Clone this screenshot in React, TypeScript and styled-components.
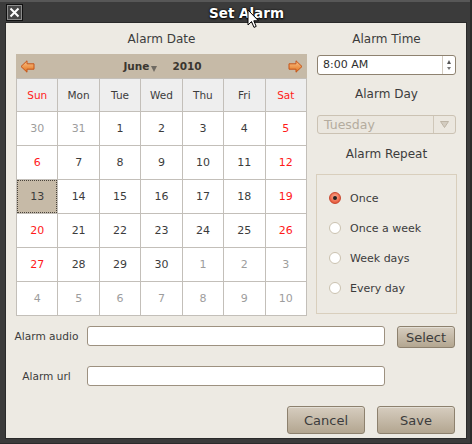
import styled, { createGlobalStyle } from "styled-components";

const GlobalStyle = createGlobalStyle`
    html, body {
        margin: 0;
        padding: 0;
        background: #2b2b2b;
    }
    body {
        font-family: "DejaVu Sans", "Liberation Sans", sans-serif;
        color: #3c3c3c;
    }
`;

const weeks: number[][] = [
    [30, 31, 1, 2, 3, 4, 5],
    [6, 7, 8, 9, 10, 11, 12],
    [13, 14, 15, 16, 17, 18, 19],
    [20, 21, 22, 23, 24, 25, 26],
    [27, 28, 29, 30, 1, 2, 3],
    [4, 5, 6, 7, 8, 9, 10],
];

const dayNames = ["Sun", "Mon", "Tue", "Wed", "Thu", "Fri", "Sat"];

const repeatOptions = ["Once", "Once a week", "Week days", "Every day"];

// days outside June
const isMuted = (row: number, value: number) =>
    (row === 0 && value > 20) || (row >= 4 && value < 20);

const ArrowIcon = ({ flip }: { flip?: boolean }) => (
    <svg width="15" height="13" viewBox="0 0 15 13" style={flip ? { transform: "scaleX(-1)" } : undefined}>
        <defs>
            <linearGradient id={flip ? "arrR" : "arrL"} x1="0" y1="0" x2="0" y2="1">
                <stop offset="0" stopColor="#fbc58a" />
                <stop offset="1" stopColor="#e2711c" />
            </linearGradient>
        </defs>
        <path
            d="M1 6.5 L7 0.8 L7 3.8 L14 3.8 L14 9.2 L7 9.2 L7 12.2 Z"
            fill={`url(#${flip ? "arrR" : "arrL"})`}
            stroke="#c4551a"
            strokeWidth="1"
            strokeLinejoin="round"
        />
    </svg>
);

const App = () => {
    return (
        <>
            <GlobalStyle />
            <Desktop>
                <Window>
                    <TitleBar>
                        <CloseButton>
                            <svg width="13" height="13" viewBox="0 0 13 13">
                                <path d="M2.5 2.5 L10.5 10.5 M10.5 2.5 L2.5 10.5" stroke="#fff" strokeWidth="2" />
                            </svg>
                        </CloseButton>
                        <Title>Set Alarm</Title>
                    </TitleBar>
                    <Cursor width="13" height="20" viewBox="0 0 13 20">
                        <path d="M1 1 L1 16 L4.5 12.6 L7 18.4 L9.2 17.4 L6.8 11.8 L11.5 11.8 Z" fill="#fff" stroke="#000" strokeWidth="1" strokeLinejoin="round" />
                    </Cursor>

                    <Content>
                        <TopSection>
                            <Column>
                                <SectionLabel $bottom={7}>Alarm Date</SectionLabel>
                                <Calendar>
                                    <CalendarHeader>
                                        <ArrowIcon />
                                        <MonthYear>
                                            <span>June</span>
                                            <DropTriangle />
                                            <Year>2010</Year>
                                        </MonthYear>
                                        <ArrowIcon flip />
                                    </CalendarHeader>
                                    <DayGrid>
                                        {dayNames.map((d, i) => (
                                            <DayName key={d} $weekend={i === 0 || i === 6}>{d}</DayName>
                                        ))}
                                        {weeks.map((week, r) =>
                                            week.map((value, c) => {
                                                const muted = isMuted(r, value);
                                                const selected = r === 2 && c === 0;
                                                return (
                                                    <DayCell
                                                        key={`${r}-${c}`}
                                                        $muted={muted}
                                                        $weekend={!muted && !selected && (c === 0 || c === 6)}
                                                        $selected={selected}
                                                    >
                                                        {value}
                                                    </DayCell>
                                                );
                                            })
                                        )}
                                    </DayGrid>
                                </Calendar>
                            </Column>

                            <Column>
                                <SectionLabel $bottom={8}>Alarm Time</SectionLabel>
                                <SpinBox>
                                    <SpinText>8:00 AM</SpinText>
                                    <SpinButtons>
                                        <Tri $up />
                                        <Tri />
                                    </SpinButtons>
                                </SpinBox>
                                <SectionLabel $top={11} $bottom={13}>Alarm Day</SectionLabel>
                                <Combo>
                                    <ComboText>Tuesday</ComboText>
                                    <ComboArrow>
                                        <svg width="9" height="7" viewBox="0 0 9 7">
                                            <path d="M0.5 0.5 L8.5 0.5 L4.5 6.5 Z" fill="#d3ccc0" stroke="#bdb4a5" strokeWidth="1" />
                                        </svg>
                                    </ComboArrow>
                                </Combo>
                                <SectionLabel $top={12} $bottom={12}>Alarm Repeat</SectionLabel>
                                <GroupBox>
                                    {repeatOptions.map((opt, i) => (
                                        <RadioRow key={opt}>
                                            <Radio $checked={i === 0} />
                                            <RadioLabel>{opt}</RadioLabel>
                                        </RadioRow>
                                    ))}
                                </GroupBox>
                            </Column>
                        </TopSection>

                        <FormGrid>
                            <FieldLabel>Alarm audio</FieldLabel>
                            <TextInput />
                            <Button $width={58} $height={22}>Select</Button>
                            <FieldLabel>Alarm url</FieldLabel>
                            <TextInput />
                        </FormGrid>

                        <ButtonRow>
                            <Button $width={78} $height={28}>Cancel</Button>
                            <Button $width={78} $height={28}>Save</Button>
                        </ButtonRow>
                    </Content>
                </Window>
            </Desktop>
        </>
    );
};

const Desktop = styled.div`
    width: 472px;
    height: 444px;
    overflow: hidden;
`;

const Window = styled.div`
    position: relative;
    width: 470px;
    height: 443px;
    box-sizing: border-box;
    background: #3b3b3b;
    border-top: 2px solid #575757;
    display: flex;
    flex-direction: column;
`;

const TitleBar = styled.div`
    height: 21px;
    display: flex;
    align-items: center;
    padding-left: 6px;
`;

const CloseButton = styled.div`
    width: 17px;
    height: 17px;
    box-sizing: border-box;
    border: 1px solid #111;
    box-shadow: inset 0 0 0 1px #8c8c8c;
    background: #474747;
    display: flex;
    align-items: center;
    justify-content: center;
`;

const Title = styled.div`
    flex: 1;
    text-align: center;
    color: #fff;
    font-weight: bold;
    font-size: 13.5px;
    text-shadow: 0 1px 2px #000, 0 0 2px #000;
`;

const Cursor = styled.svg`
    position: absolute;
    left: 247px;
    top: 7px;
`;

const Content = styled.div`
    flex: 1;
    margin: 0 4px 5px 6px;
    background: #edeae3;
    box-shadow: 0 0 0 1px #2a2a2a;
    padding-top: 8px;
    display: flex;
    flex-direction: column;
`;

const TopSection = styled.div`
    display: grid;
    grid-template-columns: 291px 141px;
    column-gap: 9px;
    padding: 0 9px 0 10px;
`;

const Column = styled.div`
    display: flex;
    flex-direction: column;
`;

const SectionLabel = styled.div<{ $top?: number; $bottom?: number }>`
    margin-top: ${(p) => p.$top ?? 0}px;
    margin-bottom: ${(p) => p.$bottom ?? 0}px;
    height: 16px;
    line-height: 16px;
    font-size: 12px;
    text-align: center;
    color: #3c3c3c;
`;

const Calendar = styled.div`
    display: flex;
    flex-direction: column;
`;

const CalendarHeader = styled.div`
    height: 24px;
    background: #c6baa7;
    display: flex;
    align-items: center;
    padding: 0 4px;
`;

const MonthYear = styled.div`
    flex: 1;
    display: flex;
    align-items: center;
    justify-content: center;
    font-weight: bold;
    font-size: 10.5px;
    color: #3a3630;
    padding-left: 2px;
`;

const DropTriangle = styled.span`
    width: 0;
    height: 0;
    margin: 5px 0 0 2px;
    border-left: 3.5px solid transparent;
    border-right: 3.5px solid transparent;
    border-top: 6px solid #6f6a62;
`;

const Year = styled.span`
    margin-left: 15px;
`;

const DayGrid = styled.div`
    display: grid;
    grid-template-columns: repeat(7, 1fr);
    grid-template-rows: 32px repeat(6, 33px);
    gap: 1px;
    padding: 1px;
    background: #c3bfb9;
`;

const DayName = styled.div<{ $weekend: boolean }>`
    background: #eeeeee;
    display: flex;
    align-items: center;
    justify-content: center;
    font-size: 10.5px;
    color: ${(p) => (p.$weekend ? "#ff1a1a" : "#3c3c3c")};
`;

const DayCell = styled.div<{ $muted: boolean; $weekend: boolean; $selected: boolean }>`
    background: ${(p) => (p.$selected ? "#c6baa7" : "#ffffff")};
    outline: ${(p) => (p.$selected ? "1px dotted #4a443b" : "none")};
    outline-offset: -1px;
    display: flex;
    align-items: center;
    justify-content: center;
    font-size: 11px;
    color: ${(p) => (p.$muted ? "#9d9d9d" : p.$weekend ? "#ff1a1a" : "#3c3c3c")};
`;

const SpinBox = styled.div`
    height: 20px;
    box-sizing: border-box;
    display: flex;
    border: 1px solid #8e8270;
    border-radius: 3px;
    background: #fff;
    margin-left: 1px;
    margin-right: 1px;
`;

const SpinText = styled.div`
    flex: 1;
    font-size: 11px;
    line-height: 18px;
    padding-left: 5px;
    color: #2e2e2e;
`;

const SpinButtons = styled.div`
    width: 12px;
    border-left: 1px solid #d2cbc0;
    display: flex;
    flex-direction: column;
    align-items: center;
    justify-content: space-around;
    padding: 2px 0;
`;

const Tri = styled.span<{ $up?: boolean }>`
    width: 0;
    height: 0;
    border-left: 2.5px solid transparent;
    border-right: 2.5px solid transparent;
    ${(p) => (p.$up ? "border-bottom: 4px solid #555;" : "border-top: 3px solid #777;")}
`;

const Combo = styled.div`
    height: 19px;
    box-sizing: border-box;
    display: flex;
    border: 1px solid #cbc2b3;
    border-radius: 3px;
    background: #ebe7df;
    margin-left: 1px;
    margin-right: 1px;
`;

const ComboText = styled.div`
    flex: 1;
    font-size: 12.5px;
    line-height: 17px;
    padding-left: 6px;
    color: #b4ac9e;
`;

const ComboArrow = styled.div`
    width: 21px;
    border-left: 1px solid #cfc7b9;
    display: flex;
    align-items: center;
    justify-content: center;
`;

const GroupBox = styled.div`
    height: 140px;
    box-sizing: border-box;
    border: 1px solid #d9cfbd;
    padding: 8px 0 0 12px;
`;

const RadioRow = styled.div`
    height: 30px;
    display: flex;
    align-items: center;
    gap: 9px;
`;

const Radio = styled.span<{ $checked: boolean }>`
    position: relative;
    width: 12px;
    height: 12px;
    box-sizing: border-box;
    border-radius: 50%;
    border: 1px solid ${(p) => (p.$checked ? "#c9472e" : "#cbc2b0")};
    background: ${(p) =>
        p.$checked ? "radial-gradient(circle at 50% 40%, #fbb39a 0%, #ec6a4c 60%, #d9432a 100%)" : "#ffffff"};
    &::after {
        content: "";
        display: ${(p) => (p.$checked ? "block" : "none")};
        position: absolute;
        left: 3px;
        top: 3px;
        width: 4px;
        height: 4px;
        border-radius: 50%;
        background: #222;
    }
`;

const RadioLabel = styled.span`
    font-size: 11px;
    color: #3c3c3c;
`;

const FormGrid = styled.div`
    margin-top: 10px;
    display: grid;
    grid-template-columns: 81px 310px 58px;
    grid-auto-rows: 22px;
    row-gap: 18px;
`;

const FieldLabel = styled.div`
    height: 20px;
    line-height: 20px;
    text-align: center;
    font-size: 10.6px;
    color: #3c3c3c;
`;

const TextInput = styled.div`
    width: 298px;
    height: 20px;
    box-sizing: border-box;
    background: #fff;
    border: 1px solid #9d9180;
    border-radius: 3px;
`;

const ButtonRow = styled.div`
    margin-top: 18px;
    display: flex;
    justify-content: flex-end;
    gap: 12px;
    padding-right: 11px;
`;

const Button = styled.div<{ $width: number; $height: number }>`
    width: ${(p) => p.$width}px;
    height: ${(p) => p.$height}px;
    box-sizing: border-box;
    border: 1px solid #8d816e;
    border-radius: 3px;
    background: linear-gradient(#d6cdbf, #b3a690);
    box-shadow: inset 0 1px 0 rgba(255, 255, 255, 0.35);
    display: flex;
    align-items: center;
    justify-content: center;
    font-size: 13px;
    color: #3c3c3c;
`;

export default App;
